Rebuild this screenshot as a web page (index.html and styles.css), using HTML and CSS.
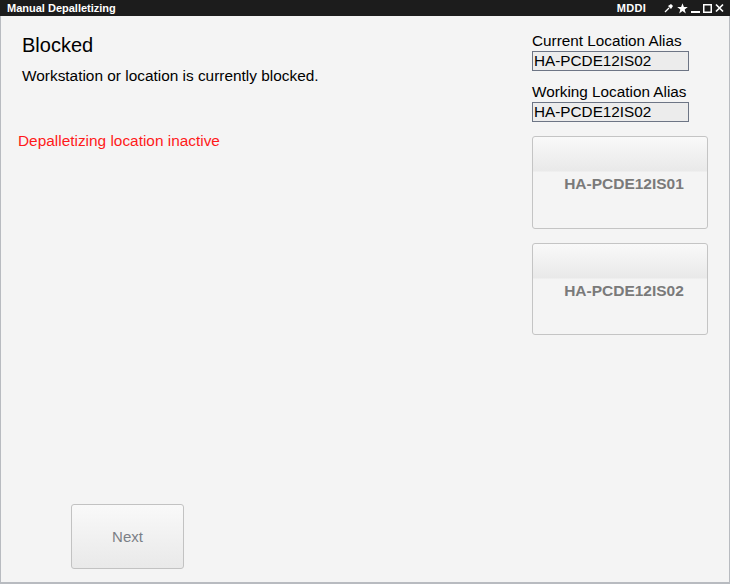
FILE: index.html
```html
<!DOCTYPE html>
<html>
<head>
<meta charset="utf-8">
<link rel="stylesheet" href="styles.css">
</head>
<body>
<div class="window">
  <div class="titlebar">
    <span class="title">Manual Depalletizing</span>
    <span class="app">MDDI</span>
    <span class="icons">
      <svg width="10" height="10" viewBox="0 0 10 10"><path d="M1 9 L5 5" stroke="#fff" stroke-width="1.2"/><path d="M4 3 L7 1 L9 3 L7 6 Z" fill="#fff"/></svg>
      <svg width="11" height="11" viewBox="0 0 11 11"><path d="M5.5 0.3 L6.9 4 L10.8 4.1 L7.7 6.5 L8.8 10.4 L5.5 8.1 L2.2 10.4 L3.3 6.5 L0.2 4.1 L4.1 4 Z" fill="#fff"/></svg>
      <svg width="9" height="10" viewBox="0 0 9 10"><rect x="0" y="8" width="9" height="2" fill="#fff"/></svg>
      <svg width="9" height="10" viewBox="0 0 9 10"><rect x="0.75" y="1.75" width="7.5" height="7.5" fill="none" stroke="#fff" stroke-width="1.5"/></svg>
      <svg width="9" height="10" viewBox="0 0 9 10"><path d="M1 1.5 L8 8.5 M8 1.5 L1 8.5" stroke="#fff" stroke-width="1.7"/></svg>
    </span>
  </div>
  <div class="content">
    <div class="left">
      <h1 class="heading">Blocked</h1>
      <p class="message">Workstation or location is currently blocked.</p>
      <p class="error">Depalletizing location inactive</p>
      <button class="next">Next</button>
    </div>
    <div class="right">
      <label class="label">Current Location Alias</label>
      <div class="field">HA-PCDE12IS02</div>
      <label class="label second">Working Location Alias</label>
      <div class="field">HA-PCDE12IS02</div>
      <button class="loc">HA-PCDE12IS01</button>
      <button class="loc">HA-PCDE12IS02</button>
    </div>
  </div>
</div>
</body>
</html>
```
FILE: styles.css
```css
* { box-sizing: border-box; }
html, body { margin: 0; padding: 0; }
body {
  width: 730px;
  height: 584px;
  font-family: "Liberation Sans", Arial, sans-serif;
  background: #f4f4f4;
  overflow: hidden;
}
.window {
  width: 730px;
  height: 584px;
  display: flex;
  flex-direction: column;
  border-left: 1px solid #b8bbc0;
  border-right: 1px solid #b8bbc0;
  border-bottom: 2px solid #b8bbc0;
  background: #f4f4f4;
}
.titlebar {
  height: 16px;
  margin-left: -1px;
  margin-right: -1px;
  background: #1c1c1c;
  color: #fff;
  display: flex;
  align-items: center;
  font-size: 11px;
  font-weight: bold;
  padding-left: 7px;
}
.title { flex: 1; }
.app { margin-right: 18px; letter-spacing: 0.3px; }
.icons {
  display: flex;
  align-items: center;
  gap: 3px;
  margin-right: 6px;
}
.icons svg { display: block; }
.content {
  flex: 1;
  display: flex;
}
.left {
  flex: 1;
  display: flex;
  flex-direction: column;
  padding-left: 21px;
}
.heading {
  margin: 17px 0 0;
  font-size: 20px;
  font-weight: normal;
  line-height: 24px;
  color: #000;
}
.message {
  margin: 10px 0 0;
  font-size: 15.4px;
  line-height: 18px;
  color: #000;
}
.error {
  margin: 47px 0 0 -4px;
  font-size: 15.4px;
  line-height: 18px;
  color: #ff1a1a;
}
.next {
  margin-top: auto;
  margin-bottom: 13px;
  margin-left: 49px;
  width: 113px;
  height: 65px;
  border: 1px solid #c2c2c2;
  border-radius: 3px;
  background: linear-gradient(#f9f9f9, #e9e9e9);
  font-family: "Liberation Sans", Arial, sans-serif;
  font-size: 15px;
  color: #7b7f86;
  padding: 0;
}
.right {
  width: 197px;
  display: flex;
  flex-direction: column;
  padding-top: 16px;
}
.label {
  font-size: 15.3px;
  line-height: 18px;
  color: #000;
}
.label.second { margin-top: 12px; }
.field {
  width: 157px;
  height: 20px;
  border: 1px solid #6d7585;
  background: #ececec;
  font-size: 15.3px;
  line-height: 18px;
  padding-left: 1px;
  color: #000;
  margin-top: 1px;
}
.loc {
  width: 176px;
  height: 93px;
  margin-top: 14px;
  border: 1px solid #c4c4c4;
  border-radius: 3px;
  background: linear-gradient(#f9f9f9 0px, #e9e9e9 34px, #f4f4f4 35px);
  font-family: "Liberation Sans", Arial, sans-serif;
  font-size: 15.5px;
  font-weight: bold;
  color: #7a7a7a;
  padding: 38px 0 0 8px;
  display: flex;
  justify-content: center;
  align-items: flex-start;
}
.loc + .loc { height: 92px; }
```
